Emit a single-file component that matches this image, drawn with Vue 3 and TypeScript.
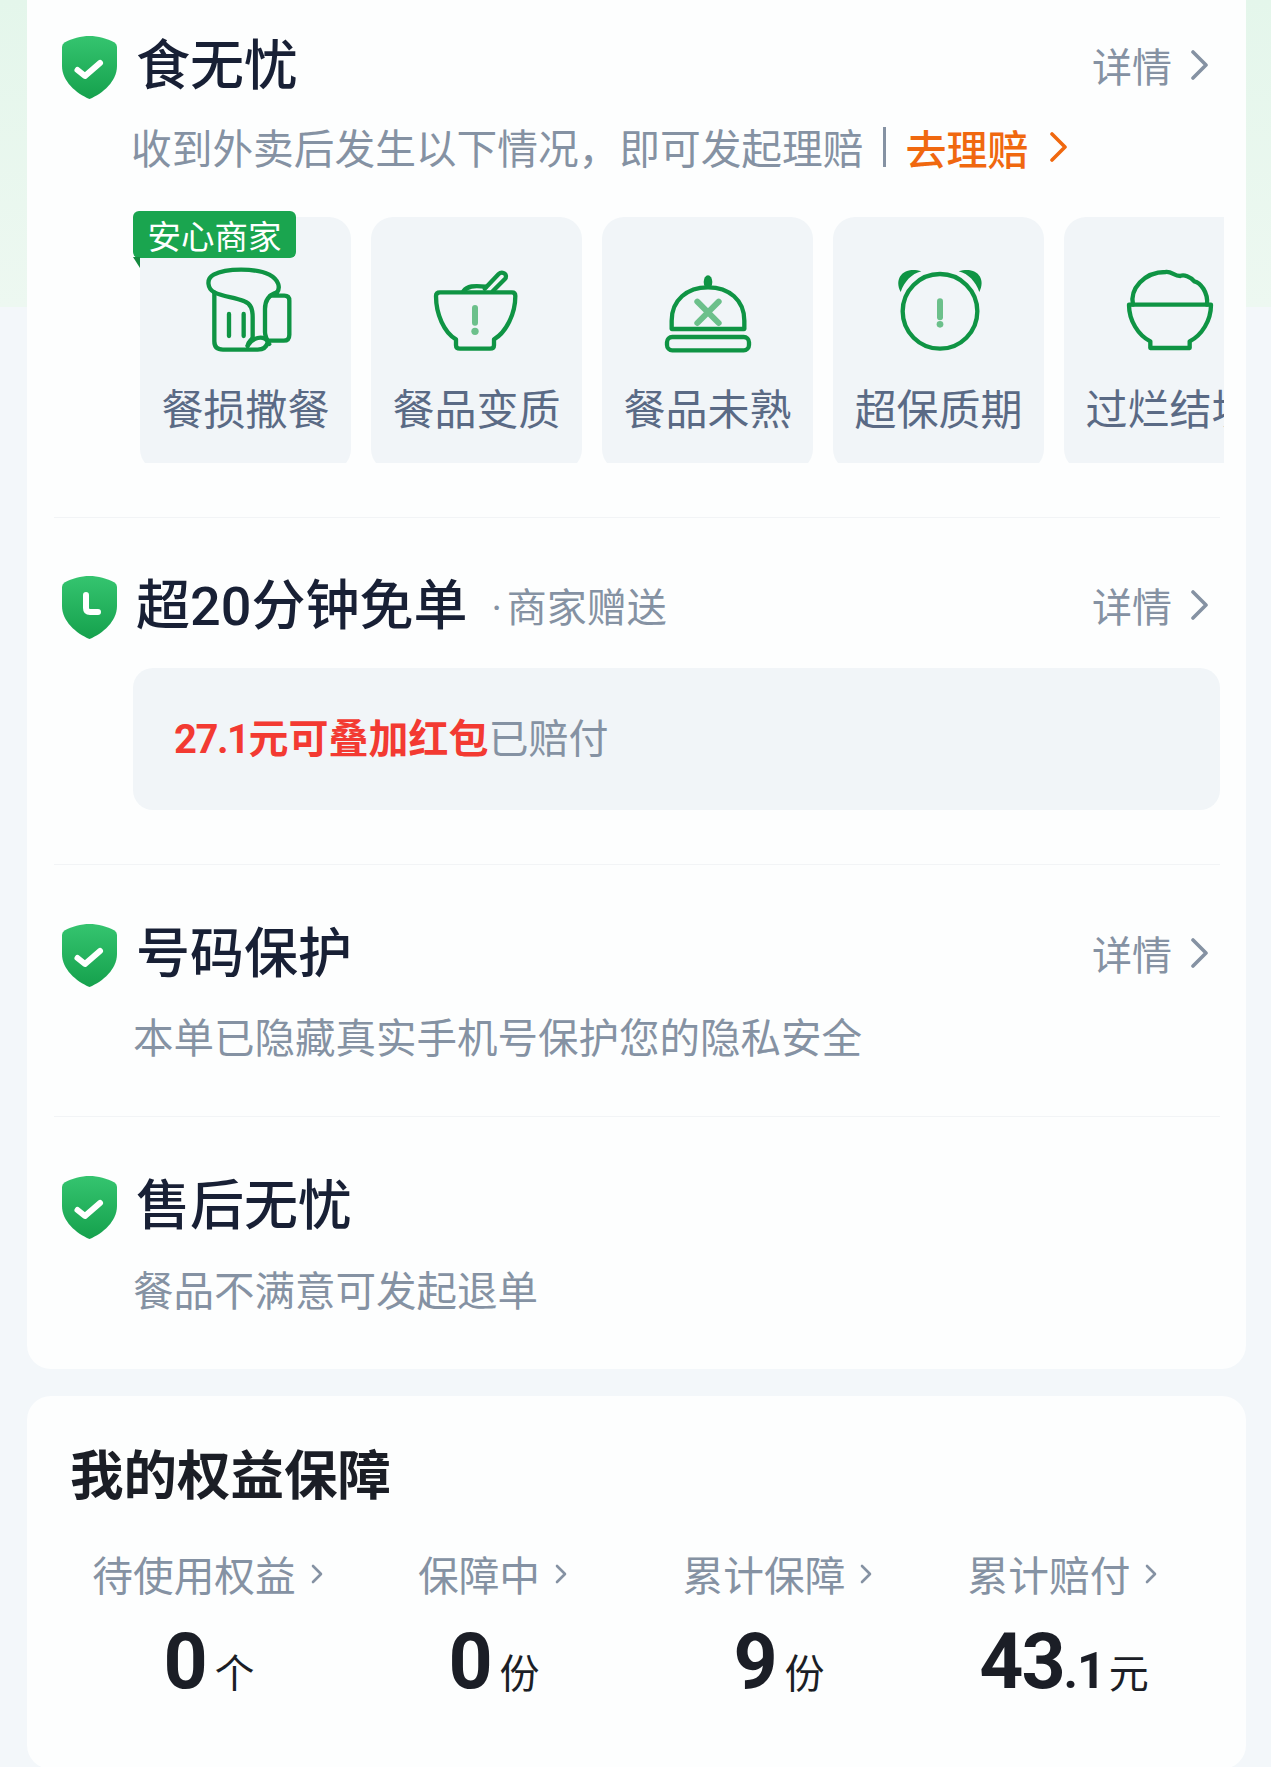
<script setup lang="ts">
interface Stat { label: string; num: string; dec?: string; unit: string }
const tiles: { key: string; label: string }[] = [
  { key: 'mug', label: '餐损撒餐' },
  { key: 'bowl', label: '餐品变质' },
  { key: 'cloche', label: '餐品未熟' },
  { key: 'clock', label: '超保质期' },
  { key: 'rice', label: '过烂结块' },
]
const stats: Stat[] = [
  { label: '待使用权益', num: '0', unit: '个' },
  { label: '保障中', num: '0', unit: '份' },
  { label: '累计保障', num: '9', unit: '份' },
  { label: '累计赔付', num: '43', dec: '.1', unit: '元' },
]
const shieldPath = 'M27.5 0C36 0 45 2.5 52.5 6.5Q55 8 55 11V30C55 45 41 57.5 27.5 63C14 57.5 0 45 0 30V11Q0 8 2.5 6.5C10 2.5 19 0 27.5 0Z'
</script>

<template>
  <div class="page">
    <svg width="0" height="0" class="defs">
      <defs>
        <linearGradient id="shieldFill" x1="0" y1="0" x2="0" y2="1">
          <stop offset="0" stop-color="#35c46f" />
          <stop offset="1" stop-color="#15a14d" />
        </linearGradient>
      </defs>
    </svg>

    <section class="card main">
      <div class="block first">
        <header class="head">
          <svg class="shield" viewBox="0 0 55 63"><path :d="shieldPath" fill="url(#shieldFill)" /><path d="M15.5 34L23 40L38 27" class="mark" /></svg>
          <h2 class="title">食无忧</h2>
          <span class="more">详情<svg class="chev" viewBox="0 0 18 30"><path d="M2 2L15 15L2 28" /></svg></span>
        </header>
        <p class="sub claim">
          收到外卖后发生以下情况，即可发起理赔<i class="sep"></i><span class="link">去理赔<svg class="chev orange" viewBox="0 0 18 30"><path d="M2 2L15 15L2 28" /></svg></span>
        </p>
        <div class="scroller">
          <div class="badge"><span>安心商家</span></div>
          <div v-for="t in tiles" :key="t.key" class="tile">
            <svg class="ticon" viewBox="0 0 270 270">
              <g v-if="t.key === 'mug'">
                <path d="M40 85C20 75 14 45 38 32C75 12 165 12 205 32C235 48 238 72 228 85" />
                <path d="M40 85C70 100 100 98 130 112C150 120 155 135 155 160V218C155 228 140 232 140 245" />
                <path d="M40 88V232Q40 257 66 257H170Q195 257 200 235C200 225 185 218 170 222C158 225 148 232 140 245" />
                <path d="M228 85C205 92 192 110 192 135V205C192 218 198 228 205 240" />
                <path d="M208 95H250Q265 95 265 110V212Q265 230 248 230H205" />
                <path d="M84 150V216M128 150V216" />
              </g>
              <g v-else-if="t.key === 'bowl'" transform="translate(-6 0)">
                <path d="M30 85H246Q256 85 256 96C256 150 228 205 192 226V244Q192 254 180 254H90Q78 254 78 244V226C42 205 18 150 18 96Q18 85 30 85Z" />
                <path d="M100 82C112 66 130 64 168 68" />
                <path d="M164 74L206 30C218 18 236 34 224 46L188 82" />
                <path class="soft" d="M135 132V176" />
                <circle class="softfill" cx="135" cy="202" r="11" />
              </g>
              <g v-else-if="t.key === 'cloche'">
                <ellipse class="fill" cx="135" cy="54" rx="13" ry="20" />
                <path d="M26 195V170C26 108 72 70 135 70C198 70 244 108 244 170V195Z" />
                <rect x="12" y="219" width="246" height="40" rx="16" />
                <path class="soft" d="M103 113L167 177M167 113L103 177" />
              </g>
              <g v-else-if="t.key === 'clock'">
                <circle cx="138" cy="142" r="112" />
                <path class="fill" d="M20 84C-2 42 30 6 82 22C52 30 32 52 20 84Z" />
                <path class="fill" d="M256 84C278 42 246 6 194 22C224 30 244 52 256 84Z" />
                <path class="soft" d="M138 112V160" />
                <circle class="softfill" cx="138" cy="181" r="10" />
              </g>
              <g v-else>
                <path d="M24 122C14 76 56 24 122 24C142 22 146 36 166 36C176 30 196 38 208 52C226 56 250 84 246 122" />
                <path d="M12 122H258C258 170 230 214 194 232V252H76V232C40 214 12 170 12 122Z" />
              </g>
            </svg>
            <span class="tlabel">{{ t.label }}</span>
          </div>
        </div>
      </div>

      <div class="block second">
        <header class="head">
          <svg class="shield" viewBox="0 0 55 63"><path :d="shieldPath" fill="url(#shieldFill)" /><path d="M24 19V32Q24 36 28 36H36" class="mark" /></svg>
          <h2 class="title">超20分钟免单</h2>
          <span class="gift"><span class="dot">·</span>商家赠送</span>
          <span class="more">详情<svg class="chev" viewBox="0 0 18 30"><path d="M2 2L15 15L2 28" /></svg></span>
        </header>
        <div class="paybox"><b><span class="amount">27.1</span>元可叠加红包</b><span>已赔付</span></div>
      </div>

      <div class="block third">
        <header class="head">
          <svg class="shield" viewBox="0 0 55 63"><path :d="shieldPath" fill="url(#shieldFill)" /><path d="M15.5 34L23 40L38 27" class="mark" /></svg>
          <h2 class="title">号码保护</h2>
          <span class="more">详情<svg class="chev" viewBox="0 0 18 30"><path d="M2 2L15 15L2 28" /></svg></span>
        </header>
        <p class="sub">本单已隐藏真实手机号保护您的隐私安全</p>
      </div>

      <div class="block fourth">
        <header class="head">
          <svg class="shield" viewBox="0 0 55 63"><path :d="shieldPath" fill="url(#shieldFill)" /><path d="M15.5 34L23 40L38 27" class="mark" /></svg>
          <h2 class="title">售后无忧</h2>
        </header>
        <p class="sub">餐品不满意可发起退单</p>
      </div>
    </section>

    <section class="card rights">
      <h2 class="rtitle">我的权益保障</h2>
      <div class="stats">
        <div v-for="s in stats" :key="s.label" class="stat">
          <div class="slabel">{{ s.label }}<svg class="mini" viewBox="0 0 12 20"><path d="M2 2L10 10L2 18" /></svg></div>
          <div class="value"><span class="num">{{ s.num }}</span><span v-if="s.dec" class="dec">{{ s.dec }}</span><span class="unit" :class="{ tight: s.dec }">{{ s.unit }}</span></div>
        </div>
      </div>
    </section>
  </div>
</template>

<style scoped>
.page {
  width: 1271px;
  height: 1767px;
  overflow: hidden;
  box-sizing: border-box;
  padding: 0 25px 0 27px;
  background: linear-gradient(#e4f6eb, #edf8f1) 0 0 / 100% 307px no-repeat, #f3f7fa;
  font-family: "Noto Sans CJK SC", "Roboto", sans-serif;
}
.defs { position: absolute; }
.card { background: #fdfefe; }
.main { border-radius: 0 0 24px 24px; padding: 0 26px 0 27px; }
.block { border-bottom: 1px solid #f2f4f6; }
.block.first { padding: 35px 0 54px; }
.block.second { padding: 57px 0 54px; }
.block.third { padding: 58px 0 52px; }
.block.fourth { padding: 58px 0 52px; border-bottom: 0; }
.third .sub { margin-top: 21px; }
.fourth .sub { margin-top: 22px; }
.head { display: flex; align-items: center; height: 64px; padding-left: 8px; }
.shield { width: 55px; height: 63px; flex: none; }
.mark { fill: none; stroke: #fff; stroke-width: 6; stroke-linecap: round; stroke-linejoin: round; }
.title {
  margin: 0 0 0 19px;
  font: 500 54px/64px "Roboto", "Noto Sans CJK SC", sans-serif;
  color: #182035;
  white-space: nowrap;
}
.gift { margin-left: 24px; font-size: 40px; line-height: 64px; color: #8592a3; white-space: nowrap; }
.dot { font-family: "Roboto", sans-serif; margin-right: 5px; }
.more {
  margin-left: auto;
  padding: 0 11px 5px 0;
  display: flex;
  align-items: center;
  font-size: 40px;
  line-height: 64px;
  color: #8592a3;
}
.chev { width: 18px; height: 30px; margin-left: 19px; fill: none; stroke: #8592a3; stroke-width: 3.6; stroke-linecap: round; stroke-linejoin: round; }
.chev.orange { stroke: #f0680f; margin-left: 22px; }
.sub {
  margin: 24px 0 0 79px;
  font-size: 40.5px;
  line-height: 56px;
  color: #8592a3;
  white-space: nowrap;
}
.sub.claim { display: flex; align-items: center; margin-top: 20px; margin-left: 77px; font-size: 40.7px; }
.sep { width: 3px; height: 40px; margin: 0 19px 0 20px; background: #8592a3; flex: none; }
.link { display: flex; align-items: center; color: #f0680f; font-weight: 500; font-size: 41px; }
.scroller {
  position: relative;
  margin: 36px 0 0 79px;
  padding: 6px 0 0 7px;
  width: 1091px;
  height: 252px;
  box-sizing: border-box;
  display: flex;
  gap: 20px;
  overflow: hidden;
}
.badge {
  position: absolute;
  left: 0;
  top: 0;
  z-index: 1;
  width: 163px;
  height: 47px;
  display: flex;
  align-items: center;
  justify-content: center;
  background: #1aa54f;
  border-radius: 6px;
  color: #fff;
  font-size: 33.5px;
  line-height: 47px;
  white-space: nowrap;
}
.badge::after {
  content: "";
  position: absolute;
  left: 0;
  top: 46px;
  border-top: 11px solid #15893f;
  border-left: 7px solid transparent;
}
.tile {
  flex: none;
  width: 211px;
  height: 254px;
  border-radius: 22px;
  background: #f1f5f8;
  display: flex;
  flex-direction: column;
  align-items: center;
}
.ticon {
  margin-top: 47px;
  width: 90px;
  height: 90px;
  fill: none;
  stroke: #0f9444;
  stroke-width: 13;
  stroke-linecap: round;
  stroke-linejoin: round;
  overflow: visible;
}
.ticon .fill { fill: #0f9444; stroke: none; }
.ticon .soft { stroke: #6cc08b; stroke-width: 18; }
.ticon .softfill { fill: #6cc08b; stroke: none; }
.tlabel {
  margin-top: 23px;
  font-size: 42px;
  line-height: 60px;
  color: #5a6a85;
  white-space: nowrap;
}
.paybox {
  margin: 29px 0 0 79px;
  height: 142px;
  box-sizing: border-box;
  border-radius: 20px;
  background: #f1f5f8;
  display: flex;
  align-items: center;
  padding: 0 0 6px 41px;
  font-size: 40px;
  color: #8592a3;
}
.paybox b { color: #f33a32; font: 700 40px "Roboto", "Noto Sans CJK SC", sans-serif; }
.amount { letter-spacing: -1.5px; }
.rights {
  margin-top: 27px;
  height: 373px;
  border-radius: 24px;
  box-sizing: border-box;
  padding: 49px 40px 0 40px;
}
.rtitle { margin: 0 0 0 3px; font-size: 53.5px; line-height: 54px; font-weight: 700; color: #1b1e26; white-space: nowrap; }
.stats { margin-top: 51px; display: grid; grid-template-columns: repeat(4, 285px); margin-left: -2px; }
.stat { display: flex; flex-direction: column; align-items: center; }
.slabel { display: flex; align-items: center; font-size: 40.7px; line-height: 48px; color: #8592a3; white-space: nowrap; }
.mini { width: 12px; height: 20px; margin-left: 15px; fill: none; stroke: #8592a3; stroke-width: 2.6; stroke-linecap: round; stroke-linejoin: round; }
.value { margin: 24px 0 0 3px; display: flex; align-items: baseline; line-height: 80px; color: #1b1e26; font-family: "Roboto", "Noto Sans CJK SC", sans-serif; }
.num { font-size: 77px; font-weight: 700; letter-spacing: -2px; }
.dec { font-size: 50px; font-weight: 700; letter-spacing: -1px; }
.unit { margin-left: 9px; font-size: 40px; font-family: "Noto Sans CJK SC", sans-serif; }
.unit.tight { margin-left: 4px; }
</style>
